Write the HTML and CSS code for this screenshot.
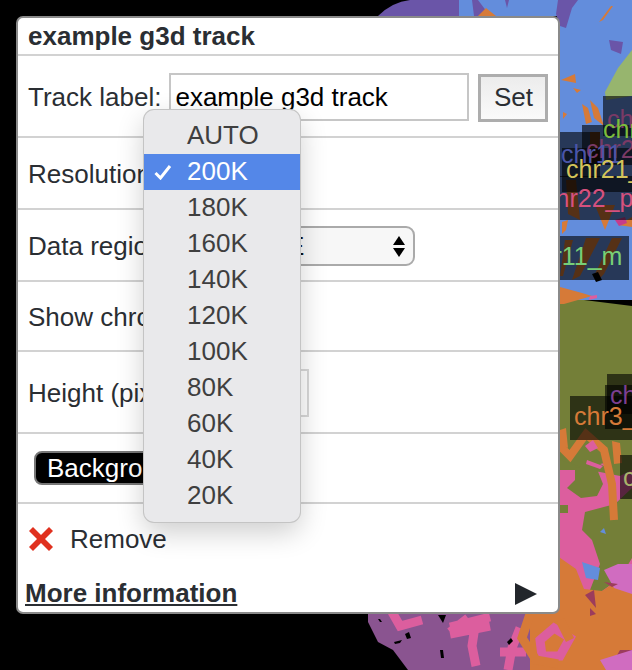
FILE: index.html
```html
<!DOCTYPE html>
<html lang="en">
<head>
<meta charset="utf-8">
<title>example g3d track</title>
<link rel="stylesheet" href="styles.css">
</head>
<body>
<svg class="scene" width="632" height="670" viewBox="0 0 632 670">
  <path fill="#6a55a8" d="M378 16 Q392 2 410 0 L470 0 L470 16Z"/>
  <path fill="#638ddc" d="M459 0H632V300H560V16H459Z"/>
  <path fill="#6a55a8" d="M472 0l6 0 12 16h-16zM505 0l4 0-2 8zM558 0h20l-6 8-6 20-6-2-4-12zM609 40l14 2-2 12-10-4z"/>
  <path fill="#d67a38" d="M478 16l8-8 10 8zM561 80l14-6 1 9zM573 88l8 2-4 3zM611 6l-12 16 4-2 10-14zM590 100l8 8 6 18-10-8zM563 112l4 2-4 5z"/>
  <path fill="#97b56e" d="M632 50L618 68 605 92 606 100 632 96Z"/>
  <path fill="#d67a38" d="M582 104l6 4 4 14-6 2zM590 132l10 0 0 30-10 0zM566 180l10 0 4 40-12-6zM595 205l20 0-10 25zM562 222l6-2 -2 10-4 4zM618 225l14-8 0 10zM565 240l8 0-10 36-3 0zM586 238l14 0-20 38-8 4zM612 238l10 0-18 36-6 6-4-4z"/>
  <path fill="#c63c8c" d="M615 220l10-3 2 6-8 3z"/>
  <path fill="#747f38" d="M560 300l24 0 48 6V470H560Z"/>
  <path fill="#d67a38" d="M560 287l22 6 10 3-28 8-4 0z"/>
  <path fill="#dc5e9e" d="M590 296l7-1 0 3-8 2zM600 464l5-1-1 3z"/>
  <path fill="#dc5e9e" d="M560 470H632V600H560Z"/>
  <path fill="#747f38" d="M560 466H632V470L620 476 590 470 560 460ZM575 468l20-4 8 20-6 12-16 2-14-10 8-8zM560 505h8v8h-8zM585 512l30-8 17-16v70l-12 20-22 16-8-4 10-26-8-24-10-10z"/>
  <path fill="none" stroke="#d67a38" stroke-width="8" d="M558 444l12 12 16-22 18 16 8 34 2 36"/>
  <path fill="#d67a38" d="M612 441l8 2 2 20-8 1zM560 430l6-2 2 20-8-4z"/>
  <path fill="#dc5e9e" d="M587 460l16 6-3 3-14-5zM585 446l8-6 5 8-8 4z"/>
  <path fill="#d67a38" d="M556 555l20 14 8 20 18 2 12-8 18 0v87H500l10-20 16-50 26-10z"/>
  <path fill="#638ddc" d="M582 562l18 6-2 12-12-2zM600 532l4-4 2 6z"/>
  <path fill="#d06cc0" d="M604 570l14-6 14 0v30l-18-6z"/>
  <path fill="#9c3c5c" d="M585 595l9-5 2 18zM604 582l14 2-6 3zM620 650h12v14h-20zM590 608l6 6-6 2z"/>

  <path fill="#8a5490" d="M368 614H530V670H408L393 650 378 642 368 622Z"/>
  <g fill="none" stroke="#dc5e9e" stroke-width="9">
    <path d="M392 612l8 14 22-6"/>
    <path d="M450 627l40-10M450 632l18-14M476 620l-4 26 4 20M450 634l40-8"/>
    <path d="M520 628l-8 20-4 22M500 652h26"/>
    <path d="M540 640l14-12 16 10-10 18-18 0z"/>
  </g>
  <path fill="none" stroke="#d67a38" stroke-width="9" d="M530 614l-8 24 14 22 22 4M560 620l10 20"/>
  <path fill="#d06cc0" d="M600 660l32-10v20h-26z"/>
  <g fill="#000">
    <path d="M405 634l4-2 2 6-4 1zM440 650l3 0 1 8-3 0zM438 615h8l-3 8zM507 642l4-4 2 3-4 4zM391 663l2 0 0 3-2 0zM378 619l2 0 2 3-2 0zM394 642l8-2-2 3-5 1z"/>
  </g>

  <g class="lbox">
    <rect x="603" y="96" width="29" height="40"/>
    <rect x="582" y="125" width="50" height="40"/>
    <rect x="560" y="132" width="40" height="45"/>
    <rect x="562" y="148" width="70" height="44"/>
    <rect x="560" y="176" width="72" height="44"/>
    <rect x="560" y="236" width="69" height="44"/>
    <rect x="607" y="374" width="25" height="40"/>
    <rect x="605" y="385" width="27" height="44"/>
    <rect x="570" y="396" width="62" height="44"/>
    <rect x="620" y="455" width="12" height="44"/>
  </g>
  <text class="ltxt" x="607" y="128" fill="#7a3a66">chr</text>
  <text class="ltxt" x="603" y="138" fill="#7cbd3c">chr</text>
  <text class="ltxt" x="586" y="158" fill="#7a3a66">chr2</text>
  <text class="ltxt" x="561" y="163" fill="#4a55a8">chr11</text>
  <text class="ltxt" x="566" y="178" fill="#d4c45a">chr21_</text>
  <text class="ltxt" x="543" y="207" fill="#d6517e">chr22_p</text>
  <text class="ltxt" x="527" y="265" fill="#77cf77">chr11_m</text>
  <text class="ltxt" x="610" y="404" fill="#7c3f90">ch</text>
  <text class="ltxt" x="574" y="425" fill="#d67a38">chr3_</text>
  <text class="ltxt" x="623" y="486" fill="#a8b46a">c</text>
  <path fill="#000" d="M592 274l6-2 4 8-6 2z"/>
</svg>

<main class="panel">
  <h1 class="title">example g3d track</h1>
  <div class="row row-tall">
    <label class="lbl">Track label:</label>
    <div class="text-field">example g3d track</div>
    <div class="set-btn">Set</div>
  </div>
  <div class="row">
    <label class="lbl">Resolution:</label>
  </div>
  <div class="row">
    <label class="lbl">Data region:</label>
    <div class="select-box">
      <span class="select-text">GENOME</span>
      <span class="select-arrows"><i class="arrow-up"></i><i class="arrow-down"></i></span>
    </div>
  </div>
  <div class="row row-short">
    <label class="lbl">Show chromosomes:</label>
  </div>
  <div class="row row-tall">
    <label class="lbl">Height (pixel):</label>
    <div class="height-field"></div>
  </div>
  <div class="row row-short row-bg">
    <div class="bg-btn">Background</div>
  </div>
  <div class="footer">
    <div class="remove">
      <svg class="x-icon" width="26" height="26" viewBox="0 0 26 26"><path d="M1 5L5 1 13 9 21 1 25 5 17 13 25 21 21 25 13 17 5 25 1 21 9 13Z"/></svg>
      <span>Remove</span>
    </div>
    <div class="more">
      <a class="more-link" href="#">More information</a>
      <svg class="play" width="22" height="22" viewBox="0 0 22 22"><path d="M0 0L22 11 0 22Z"/></svg>
    </div>
  </div>

  <ul class="menu">
    <li class="item">AUTO</li>
    <li class="item sel"><svg class="check" width="18" height="16" viewBox="0 0 18 16"><path d="M1.5 9L6.5 14 16 2" /></svg>200K</li>
    <li class="item">180K</li>
    <li class="item">160K</li>
    <li class="item">140K</li>
    <li class="item">120K</li>
    <li class="item">100K</li>
    <li class="item">80K</li>
    <li class="item">60K</li>
    <li class="item">40K</li>
    <li class="item">20K</li>
  </ul>
</main>
</body>
</html>
```
FILE: styles.css
```css
* { box-sizing: border-box; }
html, body { margin: 0; padding: 0; }
body {
  width: 632px;
  height: 670px;
  background: #000;
  position: relative;
  overflow: hidden;
  font-family: "Liberation Sans", Arial, sans-serif;
  color: #2a2e33;
}
.scene { position: absolute; left: 0; top: 0; }
.lbox rect { fill: rgba(0, 0, 0, 0.6); }
.ltxt { font-family: "Liberation Sans", Arial, sans-serif; font-size: 25px; }

.panel {
  position: absolute;
  left: 16px;
  top: 16px;
  width: 544px;
  height: 598px;
  background: #fff;
  border: 2px solid #8a8a8a;
  border-radius: 7px;
  display: flex;
  flex-direction: column;
}
.title {
  margin: 0;
  height: 38px;
  padding: 1px 0 0 10px;
  font-size: 26px;
  line-height: 35px;
  font-weight: 700;
  border-bottom: 2px solid #d2d2d2;
  white-space: nowrap;
}
.row {
  height: 72px;
  display: flex;
  align-items: center;
  padding-left: 10px;
  border-bottom: 2px solid #d2d2d2;
  font-size: 26px;
  white-space: nowrap;
}
.row-tall { height: 82px; }
.row-short { height: 70px; }
.lbl { display: block; margin: 2px 8px 0 0; }

.text-field {
  width: 300px;
  height: 48px;
  margin-top: 2px;
  border: 2px solid #c6c6c6;
  padding: 0 4px;
  line-height: 44px;
  color: #000;
  background: #fff;
}
.set-btn {
  width: 70px;
  height: 48px;
  margin: 4px 0 0 9px;
  border: 3px solid #adadad;
  background: linear-gradient(#ececec, #fafafa);
  text-align: center;
  line-height: 40px;
}
.select-box {
  width: 237px;
  height: 40px;
  margin-top: 2px;
  border: 2px solid #aaa;
  border-radius: 9px;
  background: #f7f7f7;
  display: flex;
  align-items: center;
  justify-content: space-between;
  padding: 0 8px 0 9px;
  color: #111;
}
.select-arrows { display: flex; flex-direction: column; gap: 3px; }
.arrow-up, .arrow-down {
  display: block;
  width: 0;
  height: 0;
  border-left: 6px solid transparent;
  border-right: 6px solid transparent;
}
.arrow-up { border-bottom: 9px solid #000; }
.arrow-down { border-top: 9px solid #000; }

.height-field {
  width: 113px;
  height: 48px;
  margin-top: 2px;
  border: 2px solid #d8d8d8;
}
.bg-btn {
  margin-left: 6px;
  height: 34px;
  width: 170px;
  background: #000;
  color: #fff;
  border: 2px solid #777;
  border-radius: 8px;
  padding-left: 11px;
  line-height: 31px;
}
.footer {
  flex: 1;
  display: flex;
  flex-direction: column;
  font-size: 26px;
}
.remove {
  display: flex;
  align-items: center;
  height: 34px;
  margin-top: 18px;
  padding-left: 10px;
  gap: 16px;
}
.x-icon path { fill: #e0311f; }
.more {
  display: flex;
  align-items: center;
  justify-content: space-between;
  margin-top: 22px;
  padding: 0 21px 0 7px;
}
.more-link {
  font-weight: 700;
  color: #2a2e33;
  text-decoration: underline;
}
.play path { fill: #22262b; }

.menu {
  position: absolute;
  left: 126px;
  top: 92px;
  width: 156px;
  height: 412px;
  margin: 0;
  padding: 8px 0;
  list-style: none;
  background: #e9e9eb;
  border-radius: 10px;
  box-shadow: 0 0 0 1px #c4c4c4, 0 10px 28px rgba(0, 0, 0, 0.2);
  font-size: 26px;
  color: #3f3f3f;
}
.item {
  position: relative;
  height: 36px;
  line-height: 34px;
  padding-left: 43px;
}
.sel { background: #5487e8; color: #fff; }
.check {
  position: absolute;
  left: 10px;
  top: 10px;
  fill: none;
  stroke: #fff;
  stroke-width: 3;
}
```
